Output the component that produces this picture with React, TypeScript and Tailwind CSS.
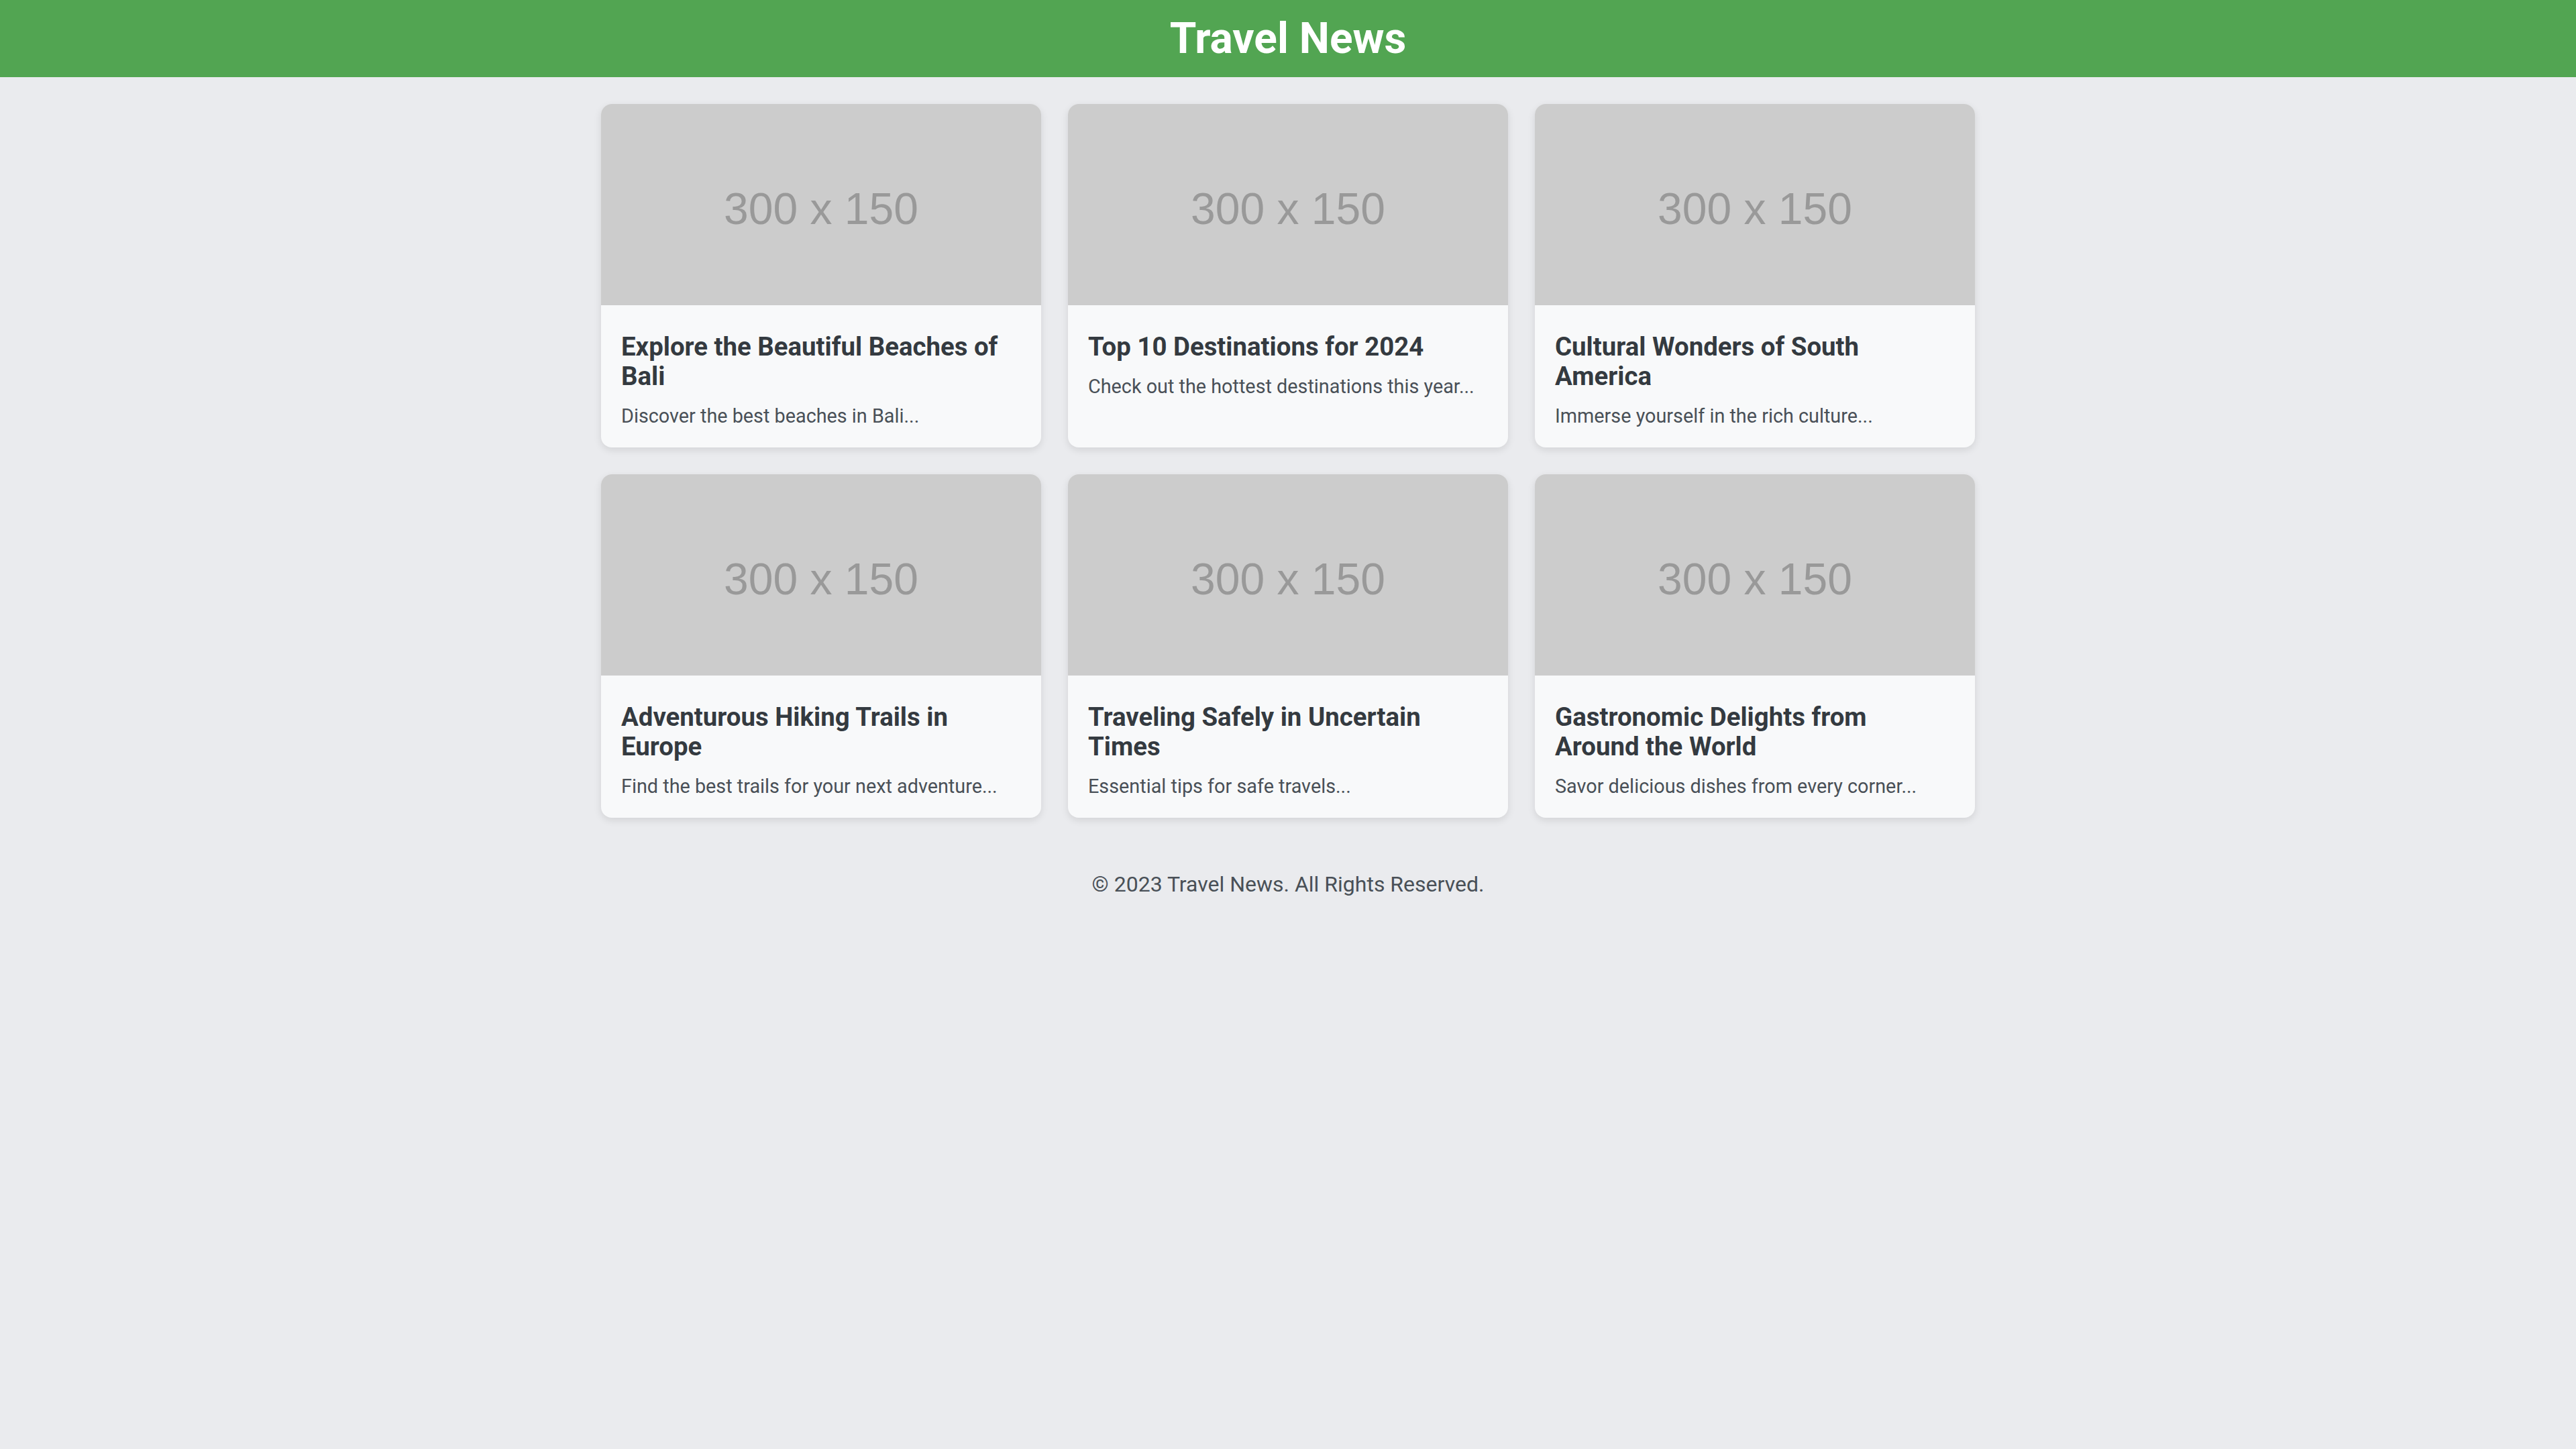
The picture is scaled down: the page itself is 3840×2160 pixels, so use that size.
import React from "react";

type Article = { title: string; desc: string };

const articles: Article[] = [
  { title: "Explore the Beautiful Beaches of Bali", desc: "Discover the best beaches in Bali..." },
  { title: "Top 10 Destinations for 2024", desc: "Check out the hottest destinations this year..." },
  { title: "Cultural Wonders of South America", desc: "Immerse yourself in the rich culture..." },
  { title: "Adventurous Hiking Trails in Europe", desc: "Find the best trails for your next adventure..." },
  { title: "Traveling Safely in Uncertain Times", desc: "Essential tips for safe travels..." },
  { title: "Gastronomic Delights from Around the World", desc: "Savor delicious dishes from every corner..." },
];

function Card({ a }: { a: Article }) {
  return (
    <div className="flex flex-col overflow-hidden rounded-[16px] bg-[#f8f9fa] shadow-[0_4px_12px_rgba(0,0,0,0.1)]">
      <div className="flex h-[300px] items-center justify-center bg-[#cccccc] pt-[12px]">
        <span className="font-['Liberation_Sans',Arial,sans-serif] text-[66px] leading-none text-[#999999]">
          300 x 150
        </span>
      </div>
      <div className="px-[30px] pt-[40px] pb-[30px]">
        <h3 className="text-[38.4px] leading-[44px] font-bold text-[#343a40]">{a.title}</h3>
        <p className="mt-[20px] text-[28.8px] leading-[34px] text-[#495057]">{a.desc}</p>
      </div>
    </div>
  );
}

export default function App() {
  return (
    <div className="min-h-[2160px] bg-[#eaebee] font-['Roboto','Liberation_Sans',sans-serif]">
      <header className="bg-[#52a552] py-[20px] text-center">
        <h1 className="text-[64px] leading-[75px] font-bold text-white">Travel News</h1>
      </header>
      <main className="px-[40px] pt-[40px] pb-[40px]">
        <div className="mx-auto grid max-w-[2048px] grid-cols-3 gap-[40px]">
          {articles.map((a) => (
            <Card key={a.title} a={a} />
          ))}
        </div>
      </main>
      <footer className="pt-[35px] pb-[40px] text-center text-[32px] text-[#495057]">
        © 2023 Travel News. All Rights Reserved.
      </footer>
    </div>
  );
}
